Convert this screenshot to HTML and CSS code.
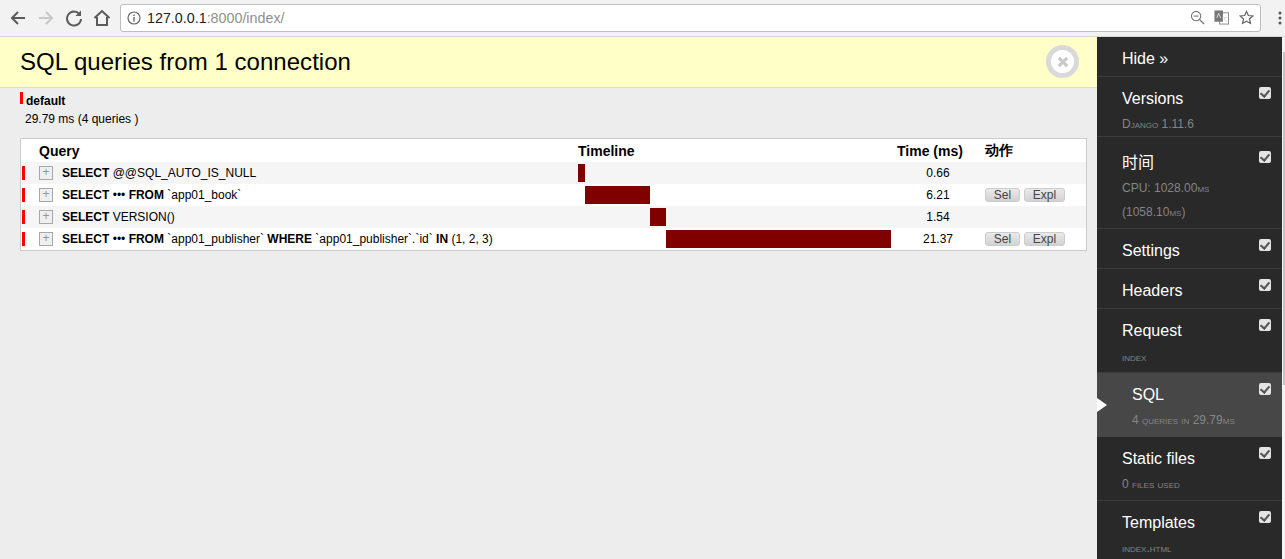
FILE: index.html
```html
<!DOCTYPE html>
<html lang="en">
<head>
<meta charset="utf-8">
<title>SQL queries</title>
<link rel="stylesheet" href="styles.css">
</head>
<body>
<header class="chrome">
  <svg class="nav-icon" viewBox="0 0 18 18"><path d="M16 9H3M9 3L3 9l6 6" fill="none" stroke="#5a5a5a" stroke-width="2"/></svg>
  <svg class="nav-icon" viewBox="0 0 18 18"><path d="M2 9h13M9 3l6 6-6 6" fill="none" stroke="#c8c8c8" stroke-width="2"/></svg>
  <svg class="nav-icon" viewBox="0 0 18 18"><path d="M14.500 5.200A7 7 0 1 0 16 10" fill="none" stroke="#5a5a5a" stroke-width="2"/><path d="M16 1.500V7h-5.500z" fill="#5a5a5a"/></svg>
  <svg class="nav-icon" viewBox="0 0 18 18"><path d="M1.500 9L9 2l7.500 7M4 8v8h10V8" fill="none" stroke="#5a5a5a" stroke-width="2"/></svg>
  <div class="omnibox">
    <svg class="info" viewBox="0 0 14 14"><circle cx="7" cy="7" r="6" fill="none" stroke="#666" stroke-width="1.200"/><path d="M7 6v4.500M7 3.500v1.400" stroke="#666" stroke-width="1.400"/></svg>
    <span class="url"><span class="host">127.0.0.1</span>:8000/index/</span>
    <svg class="omni-icon" viewBox="0 0 16 16"><circle cx="6.500" cy="6.500" r="5" fill="none" stroke="#777" stroke-width="1.200"/><path d="M10 10l5 5" stroke="#777" stroke-width="1.500"/><path d="M4 6.500h5" stroke="#777" stroke-width="1.200"/></svg>
    <svg class="omni-icon translate" viewBox="0 0 16 16"><rect x="6" y="3" width="9.500" height="12" fill="#fff" stroke="#888"/><rect x="0.500" y="0.500" width="9" height="12" fill="#777"/><path d="M3 8.500l2-5 2 5M9 8h5M11 8c0 2 1 4 3 5" fill="none" stroke="#ddd"/></svg>
    <svg class="omni-icon" viewBox="0 0 16 16"><path d="M8 1.500l2 4.400 4.700.5-3.500 3.200 1 4.700L8 11.900l-4.200 2.400 1-4.700L1.300 6.400 6 5.900z" fill="none" stroke="#666" stroke-width="1.300"/></svg>
  </div>
  <svg class="menu" viewBox="0 0 4 16"><circle cx="2" cy="3" r="1.500" fill="#555"/><circle cx="2" cy="8" r="1.500" fill="#555"/><circle cx="2" cy="13" r="1.500" fill="#555"/></svg>
</header>
<div class="page">
  <main class="content">
    <div class="panel-title">
      <h3>SQL queries from 1 connection</h3>
      <button class="close" aria-label="Close"><svg viewBox="0 0 10 10"><path d="M1.500 1.500l7 7M8.500 1.500l-7 7" stroke="#c9c9c9" stroke-width="2.600"/></svg></button>
    </div>
    <div class="panel-body">
      <div class="conn"><span class="swatch"></span><strong>default</strong></div>
      <div class="summary">29.79 ms (4 queries )</div>
      <table class="queries">
        <colgroup><col class="c-color"><col class="c-toggle"><col class="c-query"><col class="c-timeline"><col class="c-time"><col class="c-action"></colgroup>
        <thead>
          <tr><th></th><th colspan="2">Query</th><th>Timeline</th><th>Time (ms)</th><th>动作</th></tr>
        </thead>
        <tbody>
          <tr class="odd">
            <td><span class="row-mark"></span></td><td><span class="plus">+</span></td>
            <td class="sql"><b>SELECT</b> @@SQL_AUTO_IS_NULL</td>
            <td><div class="track"><span class="bar" style="margin-left:0;width:7px"></span></div></td>
            <td class="num">0.66</td><td></td>
          </tr>
          <tr>
            <td><span class="row-mark"></span></td><td><span class="plus">+</span></td>
            <td class="sql"><b>SELECT</b> ••• <b>FROM</b> `app01_book`</td>
            <td><div class="track"><span class="bar" style="margin-left:7px;width:65px"></span></div></td>
            <td class="num">6.21</td><td><span class="btn sel">Sel</span><span class="btn expl">Expl</span></td>
          </tr>
          <tr class="odd">
            <td><span class="row-mark"></span></td><td><span class="plus">+</span></td>
            <td class="sql"><b>SELECT</b> VERSION()</td>
            <td><div class="track"><span class="bar" style="margin-left:72px;width:16px"></span></div></td>
            <td class="num">1.54</td><td></td>
          </tr>
          <tr>
            <td><span class="row-mark"></span></td><td><span class="plus">+</span></td>
            <td class="sql"><b>SELECT</b> ••• <b>FROM</b> `app01_publisher` <b>WHERE</b> `app01_publisher`.`id` <b>IN</b> (1, 2, 3)</td>
            <td><div class="track"><span class="bar" style="margin-left:88px;width:225px"></span></div></td>
            <td class="num">21.37</td><td><span class="btn sel">Sel</span><span class="btn expl">Expl</span></td>
          </tr>
        </tbody>
      </table>
    </div>
  </main>
  <aside class="toolbar">
    <div class="items">
      <div class="item hide">Hide »</div>
      <div class="item h60"><span class="check"></span><div class="name">Versions</div><small>Django 1.11.6</small></div>
      <div class="item h92"><span class="check low"></span><div class="name cjk">时间</div><small class="wrap">CPU: 1028.00<span class="sc">ms</span><br>(1058.10<span class="sc">ms</span>)</small></div>
      <div class="item"><span class="check"></span><div class="name">Settings</div></div>
      <div class="item"><span class="check"></span><div class="name">Headers</div></div>
      <div class="item h64"><span class="check"></span><div class="name">Request</div><small class="caps">index</small></div>
      <div class="item h64 active"><span class="check"></span><div class="name">SQL</div><small>4 queries in 29.79<span class="sc">ms</span></small></div>
      <div class="item h64"><span class="check"></span><div class="name">Static files</div><small>0 files used</small></div>
      <div class="item h64"><span class="check"></span><div class="name">Templates</div><small>index.html</small></div>
    </div>
    <div class="scrollbar"><div class="thumb"></div></div>
  </aside>
</div>
</body>
</html>
```
FILE: styles.css
```css
* { box-sizing: border-box; }
html, body { margin: 0; height: 559px; overflow: hidden; }
body { font-family: "Liberation Sans", Arial, sans-serif; color: #000; background: #ededed; }

.chrome {
  height: 37px; background: #f2f2f2; border-bottom: 1px solid #d6d6d6;
  display: flex; align-items: center; padding: 0 0 1px 9px;
}
.nav-icon { width: 18px; height: 18px; margin-right: 10px; flex: none; }
.omnibox {
  width: 1141px; height: 28px; margin-left: -1px; background: #fff;
  border: 1px solid #bdbdbd; border-radius: 3px;
  display: flex; align-items: center; padding: 0 6px 0 6px;
}
.info { width: 14px; height: 14px; flex: none; margin-right: 6px; }
.url { flex: 1; font-size: 14.300px; color: #8f8f8f; }
.host { color: #222; }
.omni-icon { width: 15px; height: 15px; margin-left: 10px; flex: none; }
.translate { margin-left: 9px; }
.menu { width: 4px; height: 16px; margin-left: 17px; flex: none; }

.page { display: flex; height: 522px; }
.content { flex: 1; min-width: 0; }

.panel-title {
  height: 51px; background: #ffffc8; border-bottom: 1px solid #ddd;
  display: flex; align-items: center; justify-content: space-between; padding: 0 18px 0 20px;
}
.panel-title h3 { margin: 0; font-size: 24px; letter-spacing: 0.035px; font-weight: 400; line-height: 50px; }
.close {
  width: 33px; height: 33px; border-radius: 50%; border: 5px solid #d9d9d9; background: #fff;
  padding: 0; display: flex; align-items: center; justify-content: center; margin-top: -1px;
}
.close svg { width: 12px; height: 12px; }

.panel-body { padding: 4px 10px 0 20px; }
.conn { height: 14px; display: flex; font-size: 12px; line-height: 18px; }
.swatch { width: 3px; height: 12px; background: #f00; margin-right: 3px; }
.conn strong { font-weight: 700; }
.summary { font-size: 12px; line-height: 14px; margin-top: 6px; padding-left: 5px; }

.queries {
  margin-top: 12px; width: 1067px; table-layout: fixed; border-collapse: separate; border-spacing: 0;
  border: 1px solid #ccc; background: #fff; font-size: 12px;
}
.queries th { height: 23px; text-align: left; font-size: 14px; font-weight: 700; padding: 0; vertical-align: middle; }
.queries td { height: 22px; padding: 0; vertical-align: middle; }
.odd td { background: #f5f5f5; }
col.c-color { width: 18px; }
col.c-toggle { width: 23px; }
col.c-query { width: 516px; }
col.c-timeline { width: 319px; }
col.c-time { width: 88px; }
.sql { white-space: nowrap; }
.queries td.num { text-align: center; padding-right: 6px; }
.row-mark { display: block; width: 3px; height: 14px; background: #f00; margin-left: 1px; }
.plus {
  display: block; width: 14px; height: 14px; border: 1px solid #a8a8a8; background: #efefef;
  color: #8c96a0; font-size: 12px; line-height: 11px; text-align: center;
}
.track { height: 18px; display: flex; }
.bar { display: block; height: 18px; background: #800000; flex: none; }
.btn {
  display: inline-block; height: 14px; font-size: 12px; line-height: 12px; color: #444; text-align: center;
  background: linear-gradient(#eaeaea, #d2d2d2); border: 1px solid #ccc; border-radius: 3px; vertical-align: middle;
}
.sel { width: 35px; margin-right: 4px; }
.expl { width: 41px; }

.toolbar {
  width: 188px; flex: none; background: #292929; color: #fff; display: flex; opacity: 0.999;
}
.items { flex: 1; min-width: 0; }
.scrollbar { width: 3px; flex: none; background: #f3f3f3; padding: 15px 0 0 1px; }
.thumb { height: 333px; background: #c4c4c4; }
.item {
  height: 40px; border-bottom: 1px solid #3c3c3c; padding: 12px 0 0 25px; position: relative; font-size: 16px; line-height: 20px;
}
.h60 { height: 60px; }
.h64 { height: 64px; }
.h92 { height: 92px; }
.name { line-height: 20px; height: 20px; }
.cjk { font-family: "Liberation Sans", "Noto Sans CJK SC", sans-serif; margin-top: 4px; }
small {
  display: block; margin-top: 3px; font-size: 12px; line-height: 24px; color: #858585; font-variant: small-caps; white-space: nowrap;
}
small.caps { margin-top: 4px; }
small.wrap { margin-top: 3px; }
.sc { font-variant: small-caps; }
.check {
  position: absolute; top: 10px; right: 11px; width: 12px; height: 12px; border-radius: 2px; background: #e4e4e4;
}
.check.low { top: 14px; }
.check::after {
  content: ""; position: absolute; left: 3px; top: 1px; width: 4px; height: 7px;
  border: solid #555; border-width: 0 2px 2px 0; transform: rotate(40deg);
}
.active { background: #474747; padding-left: 35px; border-bottom-color: #474747; }
.active::before {
  content: ""; position: absolute; left: 0; top: 25px; border: 7px solid transparent; border-left: 10px solid #fff; border-right: 0;
}
```
